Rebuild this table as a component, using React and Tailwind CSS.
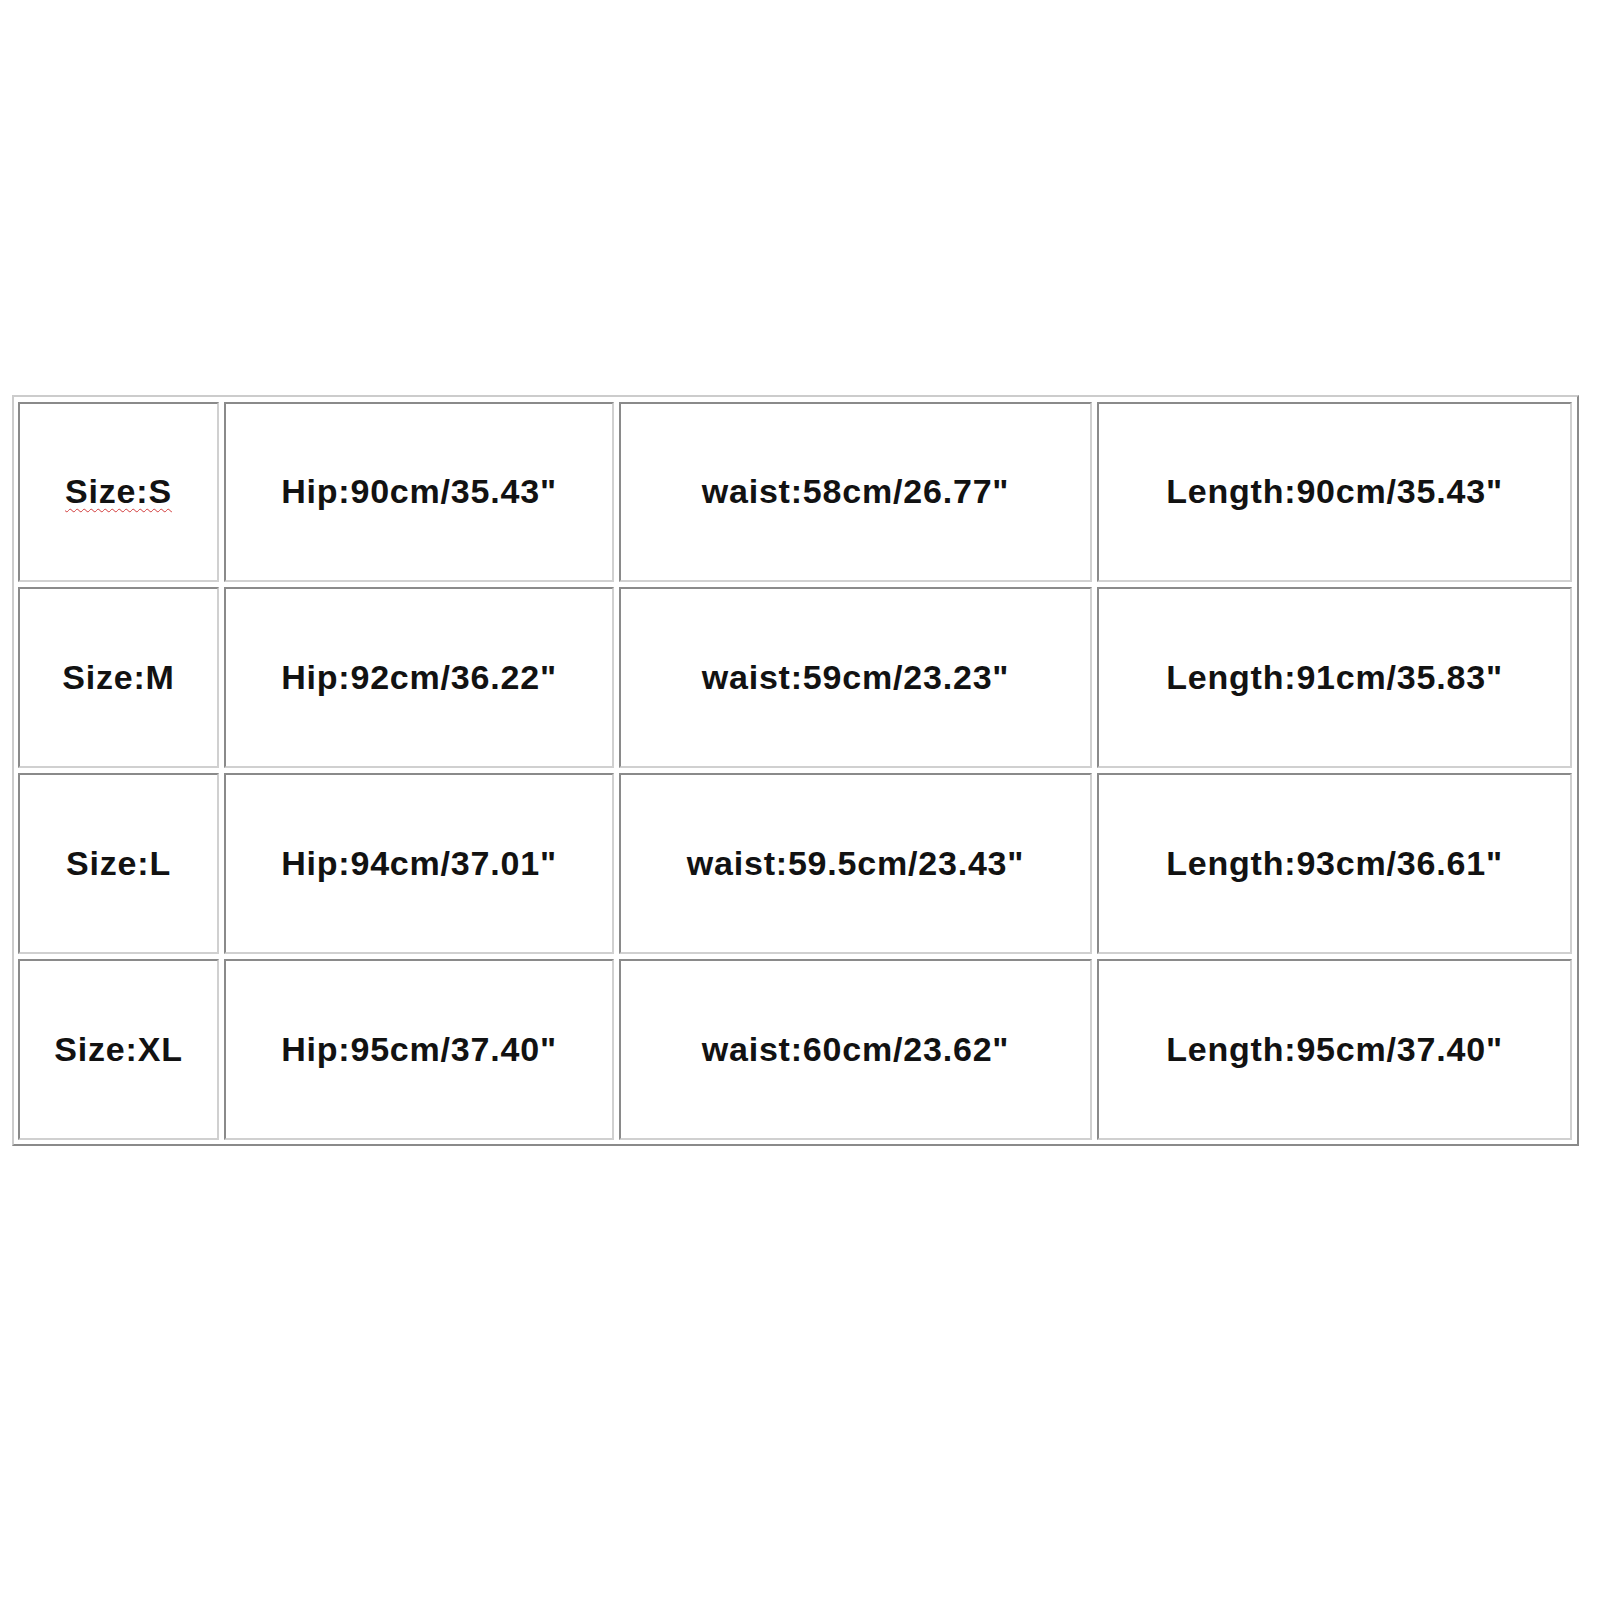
import React from "react";

const rows = [
  ["Size:S", "Hip:90cm/35.43\"", "waist:58cm/26.77\"", "Length:90cm/35.43\""],
  ["Size:M", "Hip:92cm/36.22\"", "waist:59cm/23.23\"", "Length:91cm/35.83\""],
  ["Size:L", "Hip:94cm/37.01\"", "waist:59.5cm/23.43\"", "Length:93cm/36.61\""],
  ["Size:XL", "Hip:95cm/37.40\"", "waist:60cm/23.62\"", "Length:95cm/37.40\""],
];

export default function App() {
  return (
    <div className="w-[1600px] h-[1600px] bg-white pt-[395px] pl-[12px]">
      <div className="inline-block border-2 border-t-[#cccccc] border-l-[#cccccc] border-r-[#8a8a8a] border-b-[#8a8a8a] pt-[5px] pb-[4px] pl-[4px] pr-[5px]">
        <div className="grid grid-cols-[201px_390px_473px_475px] grid-rows-[180px_181px_181px_181px] gap-[5px]">
          {rows.map((row, ri) =>
            row.map((cell, ci) => (
              <div
                key={ri + "-" + ci}
                className="flex items-center justify-center border-2 border-t-[#8a8a8a] border-l-[#8a8a8a] border-r-[#d0d0d0] border-b-[#d0d0d0]"
              >
                <span
                  className={
                    "font-['Liberation_Sans',Arial,sans-serif] font-bold text-[34px] leading-none tracking-[0.8px] text-[#121212] mt-[-2px]" +
                    (ri === 0 && ci === 0
                      ? " underline decoration-wavy decoration-[#d23b3b] decoration-1 underline-offset-[5px]"
                      : "")
                  }
                >
                  {cell}
                </span>
              </div>
            ))
          )}
        </div>
      </div>
    </div>
  );
}
